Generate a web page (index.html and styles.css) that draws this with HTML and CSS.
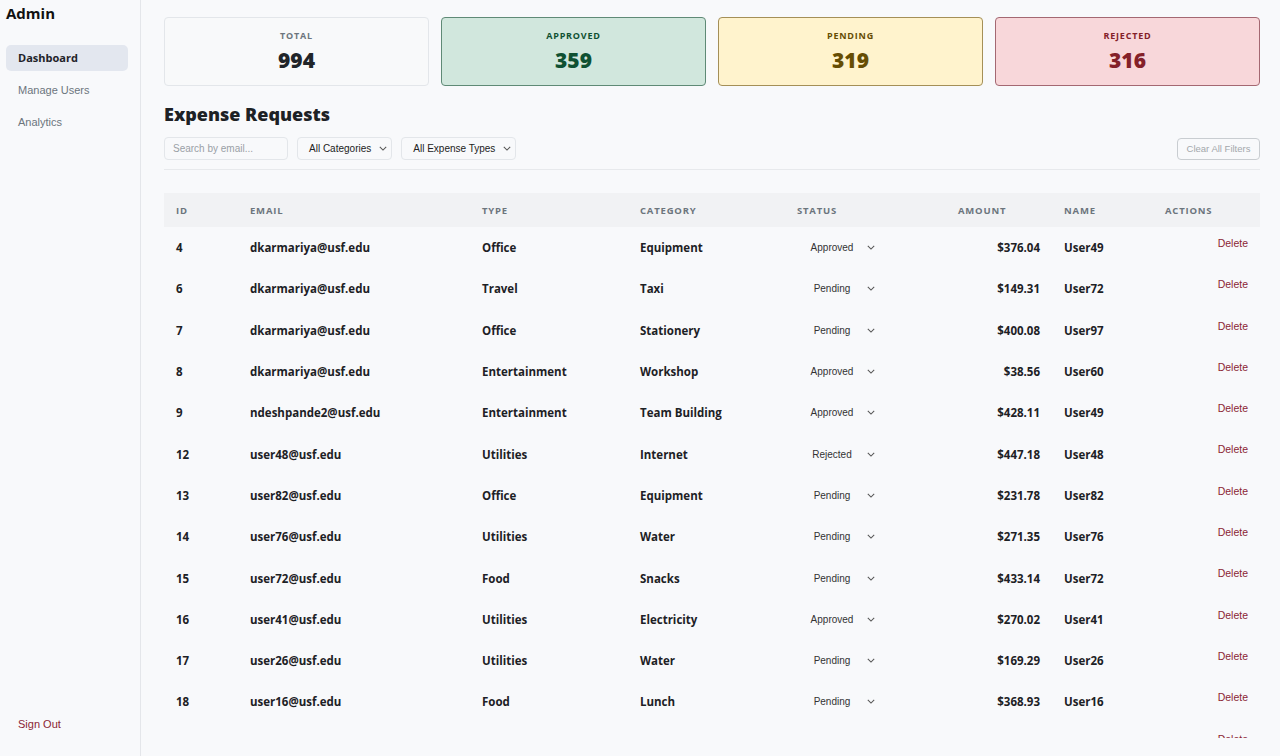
FILE: index.html
```html
<!DOCTYPE html>
<html lang="en">
<head>
<meta charset="utf-8">
<title>Admin - Expense Requests</title>
<link rel="stylesheet" href="styles.css">
</head>
<body>
<div class="app">
  <aside class="sidebar">
    <div class="brand">Admin</div>
    <nav class="nav">
      <a class="nav-item active">Dashboard</a>
      <a class="nav-item">Manage Users</a>
      <a class="nav-item">Analytics</a>
    </nav>
    <a class="signout">Sign Out</a>
  </aside>
  <main class="main">
    <section class="cards">
      <div class="card card-total"><div class="card-label">TOTAL</div><div class="card-value">994</div></div>
      <div class="card card-approved"><div class="card-label">APPROVED</div><div class="card-value">359</div></div>
      <div class="card card-pending"><div class="card-label">PENDING</div><div class="card-value">319</div></div>
      <div class="card card-rejected"><div class="card-label">REJECTED</div><div class="card-value">316</div></div>
    </section>
    <h1 class="title">Expense Requests</h1>
    <div class="filters">
      <div class="filter-left">
        <input class="search" type="text" placeholder="Search by email...">
        <div class="fselect">All Categories<svg class="chev" viewBox="0 0 10 6" width="8" height="5"><path d="M1 1l4 4 4-4" fill="none" stroke="#555" stroke-width="1.3"/></svg></div>
        <div class="fselect">All Expense Types<svg class="chev" viewBox="0 0 10 6" width="8" height="5"><path d="M1 1l4 4 4-4" fill="none" stroke="#555" stroke-width="1.3"/></svg></div>
      </div>
      <button class="clear">Clear All Filters</button>
    </div>
    <div class="divider"></div>
    <div class="table-wrap">
      <table class="table">
        <colgroup>
          <col style="width:74px"><col style="width:232px"><col style="width:158px"><col style="width:157px"><col style="width:161px"><col style="width:106px"><col style="width:101px"><col style="width:107px">
        </colgroup>
        <thead>
          <tr><th>ID</th><th>EMAIL</th><th>TYPE</th><th>CATEGORY</th><th>STATUS</th><th>AMOUNT</th><th>NAME</th><th>ACTIONS</th></tr>
        </thead>
        <tbody id="rows"></tbody>
      </table>
    </div>
  </main>
</div>
<script>
const data = [
  [4,"dkarmariya@usf.edu","Office","Equipment","Approved","$376.04","User49"],
  [6,"dkarmariya@usf.edu","Travel","Taxi","Pending","$149.31","User72"],
  [7,"dkarmariya@usf.edu","Office","Stationery","Pending","$400.08","User97"],
  [8,"dkarmariya@usf.edu","Entertainment","Workshop","Approved","$38.56","User60"],
  [9,"ndeshpande2@usf.edu","Entertainment","Team Building","Approved","$428.11","User49"],
  [12,"user48@usf.edu","Utilities","Internet","Rejected","$447.18","User48"],
  [13,"user82@usf.edu","Office","Equipment","Pending","$231.78","User82"],
  [14,"user76@usf.edu","Utilities","Water","Pending","$271.35","User76"],
  [15,"user72@usf.edu","Food","Snacks","Pending","$433.14","User72"],
  [16,"user41@usf.edu","Utilities","Electricity","Approved","$270.02","User41"],
  [17,"user26@usf.edu","Utilities","Water","Pending","$169.29","User26"],
  [18,"user16@usf.edu","Food","Lunch","Pending","$368.93","User16"],
  [19,"user33@usf.edu","Travel","Hotel","Pending","$212.40","User33"]
];
const chev = '<svg class="chev" viewBox="0 0 10 6" width="8" height="5"><path d="M1 1l4 4 4-4" fill="none" stroke="#555" stroke-width="1.3"/></svg>';
document.getElementById("rows").innerHTML = data.map(r =>
  `<tr><td>${r[0]}</td><td>${r[1]}</td><td>${r[2]}</td><td>${r[3]}</td>` +
  `<td><div class="status"><span class="status-text">${r[4]}</span>${chev}</div></td>` +
  `<td class="amount">${r[5]}</td><td>${r[6]}</td><td class="actions"><button class="delete">Delete</button></td></tr>`
).join("");
</script>
</body>
</html>
```

FILE: styles.css
```css
* { box-sizing: border-box; }
html, body { margin: 0; padding: 0; height: 100%; }
body {
  background: #f8f9fb;
  color: #212529;
  font-family: "Open Sans", "DejaVu Sans", sans-serif;
  overflow: hidden;
}
.app { display: flex; height: 756px; }

.sidebar {
  width: 141px;
  flex: none;
  border-right: 1px solid #e4e6ea;
  display: flex;
  flex-direction: column;
  padding: 4px 12px 26px 6px;
}
.brand {
  font-family: "Open Sans", sans-serif;
  font-weight: 700;
  font-size: 15px;
  color: #111;
  margin-bottom: 23px;
  line-height: 18px;
}
.nav { display: flex; flex-direction: column; gap: 6px; }
.nav-item {
  display: block;
  font-family: "Liberation Sans", Arial, sans-serif;
  font-size: 11px;
  color: #6c757d;
  padding: 7px 12px;
  line-height: 12px;
  border-radius: 5px;
}
.nav-item.active {
  background: #e3e7ef;
  color: #1f2329;
  font-family: "Open Sans", sans-serif;
  font-weight: 700;
}
.signout {
  margin-top: auto;
  font-family: "Liberation Sans", Arial, sans-serif;
  font-size: 11px;
  color: #8b2534;
  padding-left: 12px;
}

.main {
  flex: 1;
  min-width: 0;
  display: flex;
  flex-direction: column;
  padding: 17px 20px 18px 23px;
}
.cards { display: grid; grid-template-columns: repeat(4, 1fr); gap: 12px; }
.card {
  height: 69px;
  border: 1px solid #dee2e6;
  border-radius: 4px;
  display: flex;
  flex-direction: column;
  align-items: center;
  padding-top: 12px;
}
.card-label {
  font-size: 9px;
  font-weight: 700;
  letter-spacing: 0.8px;
  line-height: 12px;
}
.card-value {
  font-size: 21px;
  font-weight: 800;
  line-height: 28px;
  margin-top: 4px;
}
.card-total { background: #f8f9fa; border-color: #e3e6ea; }
.card-total .card-label { color: #6c757d; }
.card-total .card-value { color: #212529; }
.card-approved { background: #d1e7dd; border-color: #5f8a76; }
.card-approved .card-label, .card-approved .card-value { color: #0f5132; }
.card-pending { background: #fff3cd; border-color: #a48f57; }
.card-pending .card-label, .card-pending .card-value { color: #664d03; }
.card-rejected { background: #f8d7da; border-color: #a46872; }
.card-rejected .card-label, .card-rejected .card-value { color: #842029; }

.title {
  font-size: 18px;
  font-weight: 800;
  margin: 16px 0 11px;
  line-height: 24px;
  color: #1d2125;
}
.filters { display: flex; justify-content: space-between; align-items: center; }
.filter-left { display: flex; gap: 9px; }
.search {
  width: 124px;
  height: 23px;
  border: 1px solid #e3e6ea;
  border-radius: 4px;
  background: #f8f9fb;
  padding: 0 8px;
  font-family: "Liberation Sans", Arial, sans-serif;
  font-size: 10px;
  color: #333;
  outline: none;
}
.search::placeholder { color: #9aa0a6; }
.fselect {
  height: 23px;
  border: 1px solid #e3e6ea;
  border-radius: 4px;
  display: flex;
  align-items: center;
  gap: 8px;
  padding: 0 4px 0 11px;
  font-family: "Liberation Sans", Arial, sans-serif;
  font-size: 10px;
  color: #222;
}
.chev { display: block; }
.clear {
  height: 22px;
  width: 83px;
  border: 1px solid #c9cdd1;
  border-radius: 4px;
  background: #f8f9fb;
  color: #a3a7ab;
  font-family: "Liberation Sans", Arial, sans-serif;
  font-size: 9.5px;
  padding: 0;
}
.divider { height: 1px; background: #e7e9ec; margin-top: 9px; }

.table-wrap { flex: 1; min-height: 0; overflow: hidden; margin-top: 23px; }
.table { width: 100%; border-collapse: collapse; table-layout: fixed; }
.table th {
  background: #f1f2f4;
  text-align: left;
  font-size: 9.5px;
  font-weight: 700;
  letter-spacing: 0.8px;
  color: #6c757d;
  padding: 0 12px;
  height: 34px;
}
.table td {
  font-size: 11.5px;
  font-weight: 700;
  color: #1d2125;
  padding: 0 12px;
  height: 41.3px;
  white-space: nowrap;
}
.table td.amount { text-align: right; }
.status {
  width: 84px;
  display: flex;
  align-items: center;
  font-family: "Liberation Sans", Arial, sans-serif;
  font-weight: 400;
  font-size: 10px;
  color: #333;
}
.status-text { flex: 1; text-align: center; }
.status .chev { margin-right: 6px; }
.table td.actions { text-align: right; vertical-align: top; padding-top: 8px; }
.delete {
  border: 0;
  background: none;
  padding: 0;
  font-family: "Liberation Sans", Arial, sans-serif;
  font-size: 10.5px;
  color: #8b2534;
}
```
